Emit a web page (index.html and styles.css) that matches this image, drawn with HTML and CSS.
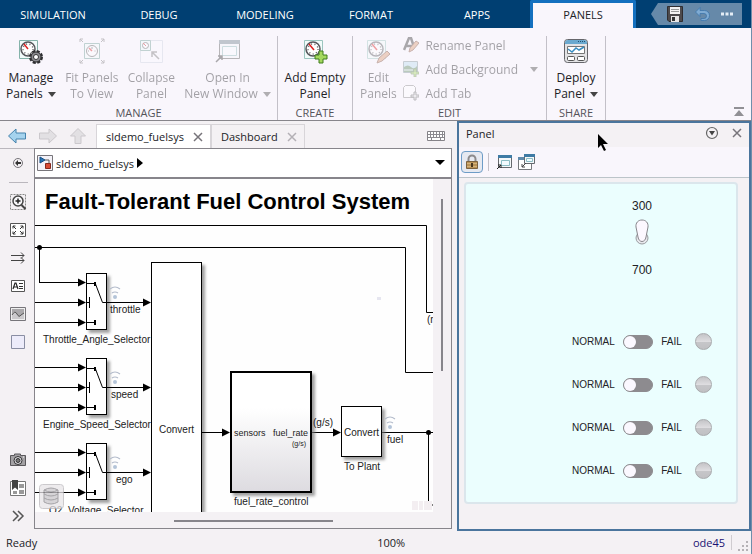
FILE: index.html
```html
<!DOCTYPE html>
<html lang="en">
<head>
  <meta charset="UTF-8" />
  <meta name="viewport" content="width=device-width, initial-scale=1.0" />
  <title>sldemo_fuelsys</title>
  <link rel="stylesheet" href="styles.css">
</head>
<body>
  <!-- Toolstrip tabs -->
  <header class="top-bar">
    <nav class="main-tabs">
      <button>SIMULATION</button>
      <button>DEBUG</button>
      <button>MODELING</button>
      <button>FORMAT</button>
      <button>APPS</button>
      <button class="active">PANELS</button>
    </nav>
    <div class="quick-access">
      <button aria-label="Save">
        <svg width="16" height="16" viewBox="0 0 16 16"><path d="M.5.5h15v15H2l-1.500-1.500z" fill="#4d4a4c" stroke="#2f2d30"/><path d="M3 1h10v7H3z" fill="#f4f2f2"/><path d="M4 3.500h8M4 5.500h8" stroke="#999"/><path d="M4 10h8v6H4z" fill="#e8e6e6"/><path d="M5 11h3v4H5z" fill="#333"/></svg>
      </button>
      <button aria-label="Undo">
        <svg width="16" height="16" viewBox="0 0 16 16"><path d="M6 1.500L1.500 6 6 10.500V7.500h4a2.500 2.500 0 0 1 0 5H7v2h3.500a4.500 4.500 0 0 0 0-10H6z" fill="#7fabd3" stroke="#3f76ab" stroke-width=".8"/></svg>
      </button>
      <button aria-label="More">
        <svg width="14" height="16" viewBox="0 0 14 16"><path d="M1 6.500h3v3H1zm4.500 0h3v3h-3zm4.500 0h3v3h-3z" fill="#e4edf5"/></svg>
      </button>
    </div>
  </header>

  <!-- Ribbon -->
  <div class="ribbon">
    <section class="group manage">
      <div class="tools">
        <button class="tool">
          <svg width="26" height="26" viewBox="0 0 26 26"><path d="M1.500 2.500h18v18h-18z" fill="#f2fbfa" stroke="#85b3aa"/><circle cx="10" cy="11" r="7" fill="#fff" stroke="#55555a" stroke-width="1.500"/><circle cx="10" cy="11" r="5" fill="none" stroke="#666" stroke-width="1.500" stroke-dasharray="1 2.500"/><path d="M10 11L6 6" stroke="#e02020" stroke-width="1.500"/><circle cx="18" cy="19" r="5.500" fill="#77777b" stroke="#2e2e31" stroke-width="3" stroke-dasharray="2.900 1.420"/><circle cx="18" cy="19" r="5" fill="#8b8b90" stroke="#333"/><circle cx="18" cy="19" r="2.500" fill="#fff" stroke="#333"/></svg>
          <span>Manage</span><span>Panels <i class="caret"></i></span>
        </button>
        <button class="tool" disabled>
          <svg width="26" height="26" viewBox="0 0 26 26"><path d="M5.500 5.500h15v15h-15z" fill="#f4fbfb" stroke="#6e9d95"/><circle cx="13" cy="13" r="5.500" fill="#fff" stroke="#555"/><path d="M13 13l-3-3" stroke="#d22" stroke-width="1.500"/><path d="M13 9v2M16.500 13h-1M9 13h1" stroke="#555"/><path d="M4 4L1 1m0 3V1h3M22 4l3-3m-3 0h3v3M4 22l-3 3m0-3v3h3M22 22l3 3m-3 0h3v-3" stroke="#777" fill="none"/></svg>
          <span>Fit Panels</span><span>To View</span>
        </button>
        <button class="tool" disabled>
          <svg width="26" height="26" viewBox="0 0 26 26"><path d="M2.500 2.500h22v22h-22z" fill="#fafaff" stroke="#ccd2e0"/><path d="M2.500 2.500h10v10h-10z" fill="#effafa" stroke="#6e9d95"/><circle cx="7.500" cy="7.500" r="3" fill="#fff" stroke="#555"/><path d="M8 8L5 5" stroke="#d22"/><path d="M21 21l-7-7m0 5v-5h5" fill="none" stroke="#777" stroke-width="1.500"/></svg>
          <span>Collapse</span><span>Panel</span>
        </button>
        <button class="tool" disabled>
          <svg width="26" height="26" viewBox="0 0 26 26"><path d="M4.500 2.500h20v18h-20z" fill="#f5f8fa" stroke="#555"/><path d="M4 2h21v4H4z" fill="#6f7f8a"/><path d="M7.500 8.500h14v9h-14z" fill="#fafdff" stroke="#8cb8b8"/><path d="M1 24l6-6m-4 0h4v4" fill="none" stroke="#333" stroke-width="1.500"/></svg>
          <span>Open In</span><span>New Window <i class="caret"></i></span>
        </button>
      </div>
      <h2>MANAGE</h2>
    </section>
    <section class="group create">
      <div class="tools">
        <button class="tool">
          <svg width="26" height="26" viewBox="0 0 26 26"><path d="M2.500 2.500h18v18h-18z" fill="#f2fbfa" stroke="#9cc5bf"/><circle cx="11" cy="11" r="7" fill="#fff" stroke="#55555a" stroke-width="1.500"/><circle cx="11" cy="11" r="5" fill="none" stroke="#666" stroke-width="1.500" stroke-dasharray="1 2.500"/><path d="M12 12L7 6" stroke="#e02020" stroke-width="1.500"/><path d="M17 13h4v4h4v4h-4v4h-4v-4h-4v-4h4z" fill="#a4d85e" stroke="#3f7d1d"/></svg>
          <span>Add Empty</span><span>Panel</span>
        </button>
      </div>
      <h2>CREATE</h2>
    </section>
    <section class="group edit">
      <div class="tools">
        <button class="tool" disabled>
          <svg width="26" height="26" viewBox="0 0 26 26"><path d="M2.500 2.500h18v18h-18z" fill="#f2fbfa" stroke="#9cc5bf"/><circle cx="11" cy="11" r="7" fill="#fff" stroke="#55555a" stroke-width="1.500"/><circle cx="11" cy="11" r="5" fill="none" stroke="#666" stroke-width="1.500" stroke-dasharray="1 2.500"/><path d="M12 12L7 6" stroke="#e02020" stroke-width="1.500"/><path d="M12 25l2-5 8-7 3 3-8 7z" fill="#d99a70" stroke="#7d4b38"/></svg>
          <span>Edit</span><span>Panels</span>
        </button>
        <div class="tool-list">
          <button disabled>
            <svg width="16" height="16" viewBox="0 0 16 16"><path d="M1 13L6 1h2l3 9M3 9h6" fill="none" stroke="#333" stroke-width="2.500"/><path d="M6 15l1-4 6-7 3 2-6 7z" fill="#d99a70" stroke="#7d4b38"/></svg>
            <span>Rename Panel</span>
          </button>
          <button disabled>
            <svg width="16" height="16" viewBox="0 0 16 16"><path d="M.5.5h14v11H.5z" fill="#b9dcee" stroke="#7d9197"/><path d="M1 6q4-3 7 0t6-1v6H1z" fill="#5d8a60"/><path d="M1 9h9" stroke="#e8f4f4"/><path d="M11 8h2v3h3v2h-3v3h-2v-3H8v-2h3z" fill="#a4d85e" stroke="#5a7d47" stroke-width=".8"/></svg>
            <span>Add Background</span>
            <i class="caret"></i>
          </button>
          <button disabled>
            <svg width="16" height="16" viewBox="0 0 16 16"><path d="M.5 12.500v-10l2-2h8l2 2v10z" fill="#fff" stroke="#888"/><path d="M11 7h2v3h3v2h-3v3h-2v-3H8v-2h3z" fill="#ddd" stroke="#666"/></svg>
            <span>Add Tab</span>
          </button>
        </div>
      </div>
      <h2>EDIT</h2>
    </section>
    <section class="group share">
      <div class="tools">
        <button class="tool">
          <svg width="26" height="26" viewBox="0 0 26 26"><rect x="1.500" y="1.500" width="23" height="23" rx="3" fill="#e3e3e5" stroke="#66666b"/><path d="M2 5q0-3 3-3h16q3 0 3 3v1H2z" fill="#6aa9cf"/><path d="M15 3.500h7" stroke="#23506f" stroke-dasharray="1 1"/><path d="M4.500 8.500h17v7h-17z" fill="#fff" stroke="#777"/><path d="M5 11l4 3 4-4 3 2 5-3" fill="none" stroke="#3a8fc2" stroke-width="1.500"/><rect x="4.500" y="18.500" width="7" height="4" rx="1" fill="#fff" stroke="#555"/><rect x="14.500" y="18.500" width="7" height="4" rx="1" fill="#fff" stroke="#555"/></svg>
          <span>Deploy</span><span>Panel <i class="caret"></i></span>
        </button>
      </div>
      <h2>SHARE</h2>
    </section>
    <button class="minimize" aria-label="Minimize toolstrip">
      <svg width="12" height="12" viewBox="0 0 12 12"><path d="M1 1h10v2H1zM6 4l5 6H1z" fill="#919095"/></svg>
    </button>
  </div>

  <main class="workspace">
    <!-- Model editor -->
    <section class="editor">
      <div class="doc-bar">
        <div class="history">
          <button aria-label="Back"><svg width="20" height="18" viewBox="0 0 20 18"><path d="M1.500 9L9 2v4h9.500v6H9v4z" fill="#a5d3ee" stroke="#4583ad"/></svg></button>
          <button aria-label="Forward"><svg width="20" height="18" viewBox="0 0 20 18"><path d="M18.500 9L11 2v4H1.500v6H11v4z" fill="#e2e0e3" stroke="#cbc8cc"/></svg></button>
          <button aria-label="Up"><svg width="18" height="18" viewBox="0 0 18 18"><path d="M9 1.500L1.500 9H6v7.500h6V9h4.500z" fill="#e2e0e3" stroke="#cbc8cc"/></svg></button>
        </div>
        <div class="doc-tab active"><span>sldemo_fuelsys</span><button aria-label="Close sldemo_fuelsys"><svg width="10" height="10" viewBox="0 0 10 10"><path d="M1 1l8 8m0-8L1 9" stroke="#77747a" stroke-width="1.500"/></svg></button></div>
        <div class="doc-tab"><span>Dashboard</span><button aria-label="Close Dashboard"><svg width="10" height="10" viewBox="0 0 10 10"><path d="M1 1l8 8m0-8L1 9" stroke="#b3b0b5" stroke-width="1.500"/></svg></button></div>
        <button class="keyboard" aria-label="Keyboard shortcuts"><svg width="18" height="10" viewBox="0 0 18 10"><path d="M.5.500h17v9H.5z" fill="#fff" stroke="#858388"/><path d="M1 3.500h16M1 6.500h16" stroke="#8c8a90"/><path d="M3.500 1v5M6.500 1v5M9.500 1v5M12.500 1v5M15.500 1v5M4.500 7v2M13.500 7v2" stroke="#8c8a90"/></svg></button>
      </div>
      <div class="editor-body">
        <div class="side-tools">
          <button aria-label="Hide browser"><svg width="18" height="18" viewBox="0 0 18 18"><circle cx="9" cy="9" r="4.500" fill="none" stroke="#77757a"/><path d="M12 8H9V6L6 9l3 3v-2h3z" fill="#333"/></svg></button>
          <hr>
          <button aria-label="Zoom"><svg width="18" height="18" viewBox="0 0 18 18"><path d="M1.500 1.500h15v15h-15z" fill="none" stroke="#888" stroke-dasharray="2 1"/><circle cx="9" cy="8" r="5" fill="#f8f8fa" stroke="#444" stroke-width="1.500"/><path d="M9 5.500v5M6.500 8h5" stroke="#222" stroke-width="1.500"/><path d="M12.500 12l4 4" stroke="#444" stroke-width="2"/></svg></button>
          <button aria-label="Fit to view"><svg width="18" height="18" viewBox="0 0 18 18"><path d="M1.500 2.500h15v13h-15z" fill="#fff" stroke="#555"/><path d="M4 7.500V5h2.500M4 5l3 3M11.500 5H14v2.500M14 5l-3 3M4 10.500V13h2.500M4 13l3-3M11.500 13H14v-2.500M14 13l-3-3" fill="none" stroke="#333"/></svg></button>
          <button aria-label="Signals"><svg width="18" height="18" viewBox="0 0 18 18"><path d="M2 6.500h13M2 11.500h13M12 3.500l3 3-3 3M12 8.500l3 3-3 3" fill="none" stroke="#444"/></svg></button>
          <button aria-label="Annotation"><svg width="18" height="18" viewBox="0 0 18 18"><path d="M2.500 3.500h13v11h-13z" fill="#fff" stroke="#555"/><path d="M4 12l2-6h1l2 6M5 10h3" fill="none" stroke="#222" stroke-width="1.200"/><path d="M10 6.500h4M10 9.500h4M10 11.500h4" stroke="#333"/></svg></button>
          <button aria-label="Image"><svg width="18" height="18" viewBox="0 0 18 18"><path d="M1.500 2.500h15v13h-15z" fill="#eee" stroke="#77757a"/><path d="M3 4h12v10H3z" fill="#aaa8ab"/><path d="M3 9q3-4 5 0t4 1l3-2v6H3z" fill="#cbc9cc"/><path d="M3 10q3-5 5-1t4 1l3-2" fill="none" stroke="#555"/></svg></button>
          <button aria-label="Area"><svg width="18" height="18" viewBox="0 0 18 18"><path d="M2.500 2.500h13v13h-13z" fill="#edecfa" stroke="#8a8ea3"/></svg></button>
          <button class="push" aria-label="Screenshot"><svg width="18" height="18" viewBox="0 0 18 18"><path d="M1.500 4.500h4V3h6v1.500h5v10h-15z" fill="#a3a1a4" stroke="#59575a"/><circle cx="9" cy="9.500" r="4" fill="#dedce0" stroke="#333"/><circle cx="9" cy="9.500" r="2" fill="#777" stroke="#333"/><path d="M14 6h1" stroke="#fff"/></svg></button>
          <button aria-label="Bookmarks"><svg width="18" height="18" viewBox="0 0 18 18"><path d="M1.500 2.500h15v14h-15z" fill="#fff" stroke="#777"/><path d="M4 12h4v3H4zM10 5h5v4h-5zM10 11h5v4h-5z" fill="#999"/><path d="M3 1h6v10l-3-2.500L3 11z" fill="#444"/></svg></button>
          <button aria-label="More tools"><svg width="18" height="18" viewBox="0 0 18 18"><path d="M4 4l5 5-5 5M9 4l5 5-5 5" fill="none" stroke="#555" stroke-width="1.500"/></svg></button>
        </div>
        <div class="editor-pane">
          <div class="breadcrumb">
            <svg width="16" height="16" viewBox="0 0 16 16"><path d="M.5.500h15v15H.5z" fill="#f4f2f8" stroke="#77757a"/><path d="M3 2v6l5-3z" fill="#2674b5" stroke="#174f83"/><path d="M8 5h4v4" fill="none" stroke="#555"/><path d="M8.500 8.500h5v5h-5z" fill="#d94b35" stroke="#86291c"/></svg>
            <a href="#">sldemo_fuelsys</a>
            <svg width="6" height="10" viewBox="0 0 6 10"><path d="M0 0l6 5-6 5z"/></svg>
            <button aria-label="Show path history"><svg width="10" height="6" viewBox="0 0 10 6"><path d="M0 0h10L5 5z"/></svg></button>
          </div>
          <div class="canvas-area">
            <div class="canvas">
              <svg class="diagram" width="100%" height="100%">
                <defs>
                  <linearGradient id="subsystem-fill" x1="0" y1="0" x2="0" y2="1"><stop offset=".3" stop-color="#fff"/><stop offset="1" stop-color="#dddbe0"/></linearGradient>
                  <filter id="shadow" x="-20%" y="-20%" width="150%" height="150%"><feDropShadow dx="3" dy="3" stdDeviation="1.500" flood-color="#777" flood-opacity=".7"/></filter>
                  <g id="badge"><circle cx="0" cy="0" r="2" fill="#b4c4d8"/><path d="M-3-4q3-2 6 0M-5-8q5-4 10 0" fill="none" stroke="#b4bccb" stroke-width="1.200"/></g>
                  <path id="arrow" d="M0 0l-8-4v8z"/>
                  <g id="selector">
                    <path class="wire" d="M0 9.500h49M0 29.500h49M0 49.500h49"/>
                    <rect class="block" x="51.500" y=".5" width="20" height="56"/>
                    <path class="wire" d="M52 10.500h9M52 29.500h3M54.500 24v11M52 49.500h9M60.500 11l7 18.500h47"/>
                    <path d="M59 9h2v4h-2zM59 47h2v5h-2z"/>
                    <use href="#arrow" x="51" y="9.500"/><use href="#arrow" x="51" y="29.500"/><use href="#arrow" x="51" y="49.500"/><use href="#arrow" x="116" y="29.500"/>
                    <use href="#badge" x="80" y="24"/>
                  </g>
                </defs>
                <g transform="translate(-35 -179)">
                  <text class="title" x="45" y="209">Fault-Tolerant Fuel Control System</text>
                  <path class="wire" d="M35 225.500h391.500v87H440M35 247.500h370.500v125H440M39.500 247v35"/>
                  <circle cx="39.500" cy="247.500" r="2.500"/>
                  <use href="#selector" x="35" y="273"/>
                  <path d="M35 281h4v3h-4z" fill="#fff"/>
                  <use href="#selector" x="35" y="358"/>
                  <use href="#selector" x="35" y="443"/>
                  <text x="110" y="313">throttle</text>
                  <text x="111" y="398">speed</text>
                  <text x="116" y="483">ego</text>
                  <text x="43" y="343">Throttle_Angle_Selector</text>
                  <text x="43" y="428">Engine_Speed_Selector</text>
                  <text x="49" y="514">O2_Voltage_Selector</text>
                  <rect class="block" x="151.500" y="262.500" width="50" height="300"/>
                  <text x="159" y="433">Convert</text>
                  <path class="wire" d="M202 432.500h26M312 432.500h26M382 432.500h60M428.500 432v73H440"/>
                  <rect class="block subsystem" x="231" y="372" width="80" height="120"/>
                  <rect class="block" x="341.500" y="406.500" width="40" height="50"/>
                  <use href="#arrow" x="230" y="432.500"/><use href="#arrow" x="341" y="432.500"/>
                  <circle cx="428.500" cy="432.500" r="2.500"/>
                  <text class="port" x="234" y="436">sensors</text>
                  <text class="port" x="273" y="436">fuel_rate</text>
                  <text class="unit" x="292" y="446">(g/s)</text>
                  <text x="313" y="426">(g/s)</text>
                  <text x="234" y="505">fuel_rate_control</text>
                  <text x="344" y="436">Convert</text>
                  <text x="344" y="470">To Plant</text>
                  <text x="387" y="443">fuel</text>
                  <text x="427" y="323">(r</text>
                  <use href="#badge" x="390" y="427"/>
                  <path d="M377 297h4v3h-4z" fill="#e6e6f0"/>
                  <path d="M412 501h6v9h-6zM419 501h4v9h-4zM424 501h8v9h-8z" fill="#f3eef1"/>
                  <g opacity=".75"><rect x="39.500" y="484.500" width="24" height="24" rx="3" fill="#e8e5e8" stroke="#bbb8bc"/><path d="M44 490v12q7 4 14 0v-12q-7-4-14 0z" fill="#c9c6ca" stroke="#88868b"/><path d="M44 490q7 4 14 0M44 494q7 4 14 0M44 498q7 4 14 0" fill="none" stroke="#88868b"/></g>
                </g>
              </svg>
            </div>
            <div class="v-scroll"><div></div></div>
            <div class="h-scroll"><div></div></div>
          </div>
        </div>
      </div>
    </section>

    <!-- Floating dashboard panel -->
    <aside class="panel">
      <div class="panel-title">
        <h1>Panel</h1>
        <button aria-label="Panel menu"><svg width="14" height="14" viewBox="0 0 14 14"><circle cx="7" cy="7" r="5.500" fill="none" stroke="#666" stroke-width="1.200"/><path d="M4 5h6L7 9.500z" fill="#444"/></svg></button>
        <button aria-label="Close panel"><svg width="10" height="10" viewBox="0 0 10 10"><path d="M1 1l8 8m0-8L1 9" stroke="#77747a" stroke-width="1.500"/></svg></button>
      </div>
      <div class="panel-tools">
        <button class="lock" aria-label="Lock panel"><svg width="14" height="16" viewBox="0 0 14 16"><path d="M3.500 7V5a3.500 3.500 0 0 1 7 0v2" fill="none" stroke="#8c8a8c" stroke-width="2"/><path d="M1.500 7.500h11v7h-11z" fill="#b99257" stroke="#7c6240"/><path d="M2 9.500h10M2 12.500h10" stroke="#d4b27b"/><path d="M6 9h2v4H6z" fill="#4a3820"/></svg></button>
        <hr>
        <button aria-label="Open in new window"><svg width="17" height="16" viewBox="0 0 17 16"><path d="M2.500 1.500h13v12h-13z" fill="#f5f8fa" stroke="#66696e"/><path d="M2 1h14v3H2z" fill="#3f7ba5"/><path d="M5.500 6.500h8v5h-8z" fill="#f2fbff" stroke="#8bbdc5"/><path d="M1 15l4-4m-3 0h3v3" fill="none" stroke="#222"/></svg></button>
        <button aria-label="Dock panel"><svg width="17" height="16" viewBox="0 0 17 16"><path d="M.5 3.500h13v12H.5z" fill="#fff" stroke="#77797d"/><path d="M0 3h14v3H0z" fill="#5f8bad"/><path d="M6.500.5h10v9h-10z" fill="#f5f8fa" stroke="#66696e"/><path d="M6 0h11v3H6z" fill="#3f7ba5"/><path d="M8.500 4.500h6v3h-6z" fill="#f2fbff" stroke="#8bbdc5"/><path d="M8 9l-4 4m0-3v3h3" fill="none" stroke="#444"/></svg></button>
      </div>
      <div class="board">
        <div class="controls">
          <span class="value">300</span>
          <button class="rocker" aria-label="Engine speed">
            <svg width="16" height="26" viewBox="0 0 16 26"><ellipse cx="8" cy="19" rx="6" ry="6" fill="#e8eaee" stroke="#999ba0"/><path d="M8 1C4 1 1.500 4 2 8l2 10c1 6 7 6 8 0l2-10c.5-4-2-7-6-7z" fill="#fcf8ff" stroke="#88868c"/></svg>
          </button>
          <span class="value">700</span>
          <div class="fault-list">
            <div class="fault"><label for="fault-1">NORMAL</label><input type="checkbox" id="fault-1"><label for="fault-1">FAIL</label><i class="lamp"></i></div>
            <div class="fault"><label for="fault-2">NORMAL</label><input type="checkbox" id="fault-2"><label for="fault-2">FAIL</label><i class="lamp"></i></div>
            <div class="fault"><label for="fault-3">NORMAL</label><input type="checkbox" id="fault-3"><label for="fault-3">FAIL</label><i class="lamp"></i></div>
            <div class="fault"><label for="fault-4">NORMAL</label><input type="checkbox" id="fault-4"><label for="fault-4">FAIL</label><i class="lamp"></i></div>
          </div>
        </div>
      </div>
      <svg class="pointer" width="12" height="18" viewBox="0 0 12 18"><path d="M1 0v14l3-3 3 6 2-1-3-6h5z"/></svg>
    </aside>
  </main>

  <footer class="status-bar">
    <span>Ready</span>
    <span class="zoom-level">100%</span>
    <a href="#">ode45</a>
    <svg width="12" height="12" viewBox="0 0 12 12"><path d="M8 0h2v2H8zM4 4h2v2H4zM8 4h2v2H8zM0 8h2v2H0zM4 8h2v2H4zM8 8h2v2H8z" fill="#b5b2b6"/></svg>
  </footer>
</body>
</html>
```
FILE: styles.css
```css
:root {
  --navy: #003f72;
  --chrome: #f4f1f4;
  --ribbon: #f9f6fc;
  --line: #87858b;
  --text: #222226;
}

* {
  box-sizing: border-box;
}

body {
  margin: 0;
  min-height: 100vh;
  display: flex;
  flex-direction: column;
  font-family: "Open Sans", "Noto Sans", sans-serif;
  font-size: 11px;
  color: var(--text);
  background: var(--chrome);
  border-right: 1px solid #6f8fab;
}

button {
  padding: 0;
  border: none;
  background: none;
  font: inherit;
  color: inherit;
}

svg {
  display: block;
  flex: none;
}

h1, h2 {
  margin: 0;
  font-size: 11px;
  font-weight: 400;
}

a {
  color: inherit;
  text-decoration: none;
}

/* top bar */
.top-bar {
  display: flex;
  justify-content: space-between;
  height: 28px;
  background: var(--navy);
}

.main-tabs {
  display: flex;
}

.main-tabs button {
  width: 106px;
  color: white;
  font-size: 11px;
}

.main-tabs .active {
  border: 3px solid #1470bf;
  border-bottom: none;
  border-radius: 2px 2px 0 0;
  padding-bottom: 3px;
  color: var(--text);
  background: var(--ribbon);
}

.quick-access {
  display: flex;
  align-items: center;
  justify-content: space-between;
  width: 91px;
  height: 22px;
  margin: 3px 9px 0 0;
  padding: 0 8px 0 16px;
  background: #6689a9;
  clip-path: polygon(7px 0, 100% 0, 100% 100%, 7px 100%, 0 50%);
}

/* ribbon */
.ribbon {
  display: flex;
  height: 93px;
  padding-top: 8px;
  background: var(--ribbon);
  border-bottom: 1px solid var(--line);
}

.group {
  display: flex;
  flex-direction: column;
  justify-content: space-between;
  border-right: 1px solid #c3c0c8;
}

.group h2 {
  text-align: center;
  line-height: 14px;
  color: #55545a;
}

.manage {
  width: 278px;
}

.create {
  width: 75px;
}

.edit {
  width: 194px;
}

.share {
  width: 59px;
}

.tools {
  display: flex;
  justify-content: center;
}

.manage .tools {
  justify-content: space-between;
  padding: 0 6px;
}

.tool {
  display: flex;
  flex-direction: column;
  align-items: center;
  font-size: 12px;
  line-height: 16px;
  white-space: nowrap;
}

.tool svg {
  margin: 2px 0 6px;
}

.tool:disabled,
.tool-list button:disabled {
  opacity: 0.4;
}

.caret {
  display: inline-block;
  margin-left: 2px;
  border: 4px solid transparent;
  border-top: 5px solid #444;
  border-bottom: 0;
  vertical-align: 1px;
}

.edit .tools {
  justify-content: space-between;
  padding: 0 8px 0 7px;
}

.tool-list {
  margin-top: -3px;
}

.tool-list button {
  display: flex;
  align-items: center;
  gap: 6px;
  height: 24px;
  font-size: 12px;
}

.tool-list .caret {
  margin-left: 6px;
}

.minimize {
  margin: auto 6px 2px auto;
}

/* workspace */
.workspace {
  flex: 1;
  display: grid;
  grid-template-columns: 1fr 294px;
  gap: 5px;
}

.editor {
  display: flex;
  flex-direction: column;
  min-width: 0;
  padding-bottom: 2px;
}

.doc-bar {
  display: flex;
  align-items: flex-end;
  height: 27px;
  padding-top: 3px;
}

.history {
  display: flex;
  align-items: center;
  gap: 11px;
  width: 96px;
  height: 24px;
  padding-left: 7px;
}

.doc-tab {
  display: flex;
  align-items: center;
  gap: 9px;
  height: 24px;
  padding: 0 7px 0 9px;
  border: 1px solid #d8d5d9;
  border-bottom: none;
}

.doc-tab.active {
  background: white;
}

.keyboard {
  margin: 0 7px 7px auto;
}

.editor-body {
  flex: 1;
  display: flex;
}

.side-tools {
  display: flex;
  flex-direction: column;
  align-items: center;
  gap: 10px;
  width: 34px;
  padding: 5px 0 4px 2px;
  border-top: 1px solid #bab7bd;
}

.side-tools hr {
  width: 19px;
  margin: 0;
  border: none;
  border-top: 1px solid #bab7bd;
}

.side-tools .push {
  margin-top: auto;
}

.editor-pane {
  flex: 1;
  display: flex;
  flex-direction: column;
  min-width: 0;
  border: 1px solid var(--line);
}

.breadcrumb {
  display: flex;
  align-items: center;
  gap: 3px;
  height: 30px;
  padding: 0 6px 0 2px;
  background: white;
  border-bottom: 2px solid var(--line);
  font-size: 11px;
}

.breadcrumb button {
  margin-left: auto;
}

.canvas-area {
  flex: 1;
  display: grid;
  grid-template-columns: 1fr 18px;
  grid-template-rows: 1fr 16px;
}

.canvas {
  position: relative;
  overflow: hidden;
  background: #fefefe;
}

.diagram {
  position: absolute;
  inset: 0;
}

.diagram text {
  font-family: "Liberation Sans", Arial, sans-serif;
  font-size: 10px;
  fill: #222;
}

.diagram .title {
  font-size: 22px;
  font-weight: 700;
  fill: black;
}

.diagram .port {
  font-size: 9px;
}

.diagram .unit {
  font-size: 7px;
}

.wire {
  fill: none;
  stroke: black;
}

.block {
  fill: white;
  stroke: black;
  filter: url(#shadow);
}

.subsystem {
  fill: url(#subsystem-fill);
  stroke-width: 2;
}

.v-scroll {
  padding: 20px 0 0 8px;
}

.v-scroll div {
  width: 2px;
  height: 55%;
  background: var(--line);
}

.h-scroll {
  padding-top: 8px;
}

.h-scroll div {
  width: 40%;
  height: 2px;
  margin-left: 35%;
  background: var(--line);
}

/* dashboard panel */
.panel {
  position: relative;
  display: flex;
  flex-direction: column;
  border: 2px solid #4a759d;
}

.panel-title {
  display: flex;
  align-items: center;
  gap: 13px;
  height: 24px;
  padding: 0 7px 4px;
}

.panel-title h1 {
  margin-right: auto;
}

.panel-tools {
  display: flex;
  align-items: center;
  gap: 5px;
  height: 31px;
  padding: 0 2px;
  background: var(--ribbon);
  border-bottom: 1px solid #bcc4c9;
}

.panel-tools hr {
  width: 1px;
  height: 18px;
  margin: 0 2px 0 0;
  border: none;
  background: #c3c0c8;
}

.lock {
  display: grid;
  place-items: center;
  width: 22px;
  height: 22px;
  border: 1px solid #6d9cc7;
  border-radius: 4px;
  background: #e6e9f1;
}

.board {
  flex: 1;
  display: flex;
  justify-content: flex-end;
  margin: 4px 11px 25px 5px;
  padding: 14px 24px 0;
  border: 2px solid #dbe6ec;
  border-radius: 4px;
  background: #ebfefe;
}

.controls {
  display: flex;
  flex-direction: column;
  align-items: center;
  width: 140px;
  font-family: "Liberation Sans", Arial, sans-serif;
}

.value {
  font-size: 12px;
  line-height: 16px;
}

.rocker {
  margin: 5px 0 17px;
}

.fault-list {
  align-self: stretch;
  margin-top: 42px;
}

.fault {
  display: flex;
  align-items: center;
  justify-content: space-between;
  height: 43px;
  font-size: 10px;
}

.fault input {
  appearance: none;
  display: flex;
  width: 30px;
  height: 14px;
  margin: 0;
  border: 1px solid #8d8b8f;
  border-radius: 7px;
  background: #8d8b8f;
}

.fault input::before {
  content: "";
  width: 12px;
  height: 12px;
  border-radius: 50%;
  background: #fbf8ff;
}

.fault input:checked {
  justify-content: flex-end;
}

.lamp {
  width: 17px;
  height: 17px;
  margin-left: 5px;
  border: 1px solid #a9aaad;
  border-radius: 50%;
  background: linear-gradient(#c4c4c7, #dedde0 50%, #c6c6c9 55%, #c0c0c3);
}

.pointer {
  position: absolute;
  top: 11px;
  left: 138px;
}

/* status bar */
.status-bar {
  display: flex;
  align-items: center;
  height: 23px;
  padding: 0 1px 0 6px;
}

.zoom-level {
  flex: 1;
  padding-left: 52px;
  text-align: center;
}

.status-bar a {
  padding-right: 6px;
  border-right: 1px solid #cfccd0;
  color: #1a1273;
}

.status-bar svg {
  margin: 8px 0 0 6px;
}
```
